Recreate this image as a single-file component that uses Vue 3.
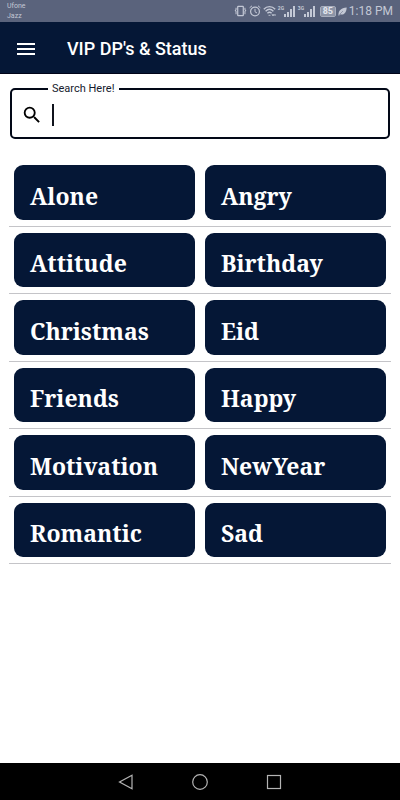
<template>
    <div class="screen">
        <div class="status">
            <div class="status-carriers">
                <span>Ufone</span>
                <span>Jazz</span>
            </div>
            <div class="status-icons">
                <svg width="13" height="12" viewBox="0 0 14 12" fill="none" stroke="currentColor">
                    <rect x="4" y="1" width="6" height="10" rx="0.5" stroke-width="1.3"/>
                    <path d="M2.2 2.5v2l-.8 1 .8 1v3M11.8 2.5v2l.8 1-.8 1v3" stroke-width="1.1"/>
                </svg>
                <svg width="12" height="12" viewBox="0 0 12 12" fill="none" stroke="currentColor">
                    <circle cx="6" cy="6.5" r="4.4" stroke-width="1.2"/>
                    <path d="M6 3.8v3l2 1.2M.6 2.8L3 .8M11.4 2.8L9 .8"/>
                </svg>
                <svg width="13" height="12" viewBox="0 0 13 12" fill="none" stroke="currentColor">
                    <path d="M.8 4.2C4 .8 9 .8 12.2 4.2M2.6 6.2C5 3.9 8 3.9 10.4 6.2M4.4 8.2C5.7 7 7.3 7 8.6 8.2" stroke-width="1.4"/>
                    <path d="M5.5 10.3h2M9 9l1 2 1-2M12 9v2" stroke-width="0.9"/>
                </svg>
                <div v-for="net in networks" :key="net" class="signal">
                    <span>{{ net }}</span>
                    <svg width="11" height="11" viewBox="0 0 11 11" fill="currentColor">
                        <path d="M0 8h2v3H0zM3 6h2v5H3zM6 3h2v8H6zM9 0h2v11H9z"/>
                    </svg>
                </div>
                <div class="battery"><span>85</span></div>
                <svg width="9" height="9" viewBox="0 0 9 9">
                    <path d="M.5 8.5C0 4 3 1 8.7.5C8.5 6 5.5 8.5 2 7.3L1 8.7z" fill="currentColor"/>
                    <path d="M1.5 7.5L5 4" stroke="#5a637c" stroke-width="0.5"/>
                </svg>
                <span class="clock">1:18 PM</span>
            </div>
        </div>

        <header class="bar">
            <button class="menu-btn" type="button" aria-label="Menu">
                <svg width="18" height="12" viewBox="0 0 18 12" fill="currentColor">
                    <path d="M0 0h18v2H0zM0 5h18v2H0zM0 10h18v2H0z"/>
                </svg>
            </button>
            <h1>VIP DP's &amp; Status</h1>
        </header>

        <main class="content">
            <fieldset class="search">
                <legend><label for="search">Search Here!</label></legend>
                <svg class="search-icon" viewBox="0 0 24 24" fill="currentColor">
                    <path d="M15.5 14h-.79l-.28-.27A6.471 6.471 0 0 0 16 9.5 6.5 6.5 0 1 0 9.5 16c1.61 0 3.09-.59 4.23-1.57l.27.28v.79l5 4.99L20.49 19l-4.99-5zm-6 0C7.01 14 5 11.99 5 9.5S7.01 5 9.5 5 14 7.01 14 9.5 11.99 14 9.5 14z"/>
                </svg>
                <span class="caret"></span>
                <input id="search" v-model="query" type="text" autocomplete="off"/>
            </fieldset>

            <ul class="list">
                <li v-for="row in rows" :key="row[0]" class="list-row">
                    <button v-for="item in row" :key="item" class="category" type="button">{{ item }}</button>
                </li>
            </ul>
        </main>

        <nav class="nav">
            <button type="button" aria-label="Back">
                <svg width="16" height="16" viewBox="0 0 16 16"><path d="M14 1.2v13.6L1.5 8z"/></svg>
            </button>
            <button type="button" aria-label="Home">
                <svg width="16" height="16" viewBox="0 0 16 16"><circle cx="8" cy="8" r="7.3"/></svg>
            </button>
            <button type="button" aria-label="Recent apps">
                <svg width="16" height="16" viewBox="0 0 16 16"><rect x="1.5" y="1.5" width="13" height="13"/></svg>
            </button>
        </nav>
    </div>
</template>

<script setup>
import { ref } from 'vue';

const query = ref('');
const networks = ['2G', '3G'];
const rows = [
    ['Alone', 'Angry'],
    ['Attitude', 'Birthday'],
    ['Christmas', 'Eid'],
    ['Friends', 'Happy'],
    ['Motivation', 'NewYear'],
    ['Romantic', 'Sad']
];
</script>

<style>
    body{
        margin: 0;
        background-color: #FFFFFF;
    }
</style>

<style scoped>
    .screen{
        display: flex;
        flex-direction: column;
        min-height: 100vh;
        font-family: Roboto, "Noto Sans", sans-serif;
    }
    button{
        border: 0;
        padding: 0;
        background: none;
        color: inherit;
        font-family: inherit;
        cursor: pointer;
    }
    .status{
        display: flex;
        justify-content: space-between;
        align-items: center;
        height: 22px;
        padding: 0 7px;
        background-color: #5a637c;
        color: #c3c8d5;
    }
    .status-carriers{
        display: flex;
        flex-direction: column;
        font-size: 7px;
        line-height: 10px;
    }
    .status-icons{
        display: flex;
        align-items: center;
        gap: 2px;
    }
    .signal{
        display: flex;
        align-items: center;
        width: 18px;
    }
    .signal span{
        align-self: flex-start;
        font-size: 5px;
        line-height: 5px;
        font-weight: 700;
    }
    .battery{
        display: flex;
        align-items: center;
        margin-left: 2px;
        border: 1px solid #a9afbe;
        border-radius: 2px;
    }
    .battery span{
        width: 14px;
        background-color: #8d94a6;
        color: #e4e7ee;
        font-size: 9px;
        line-height: 9px;
        font-weight: 700;
        text-align: center;
    }
    .clock{
        font-size: 12px;
        line-height: 14px;
    }
    .bar{
        box-sizing: border-box;
        display: flex;
        align-items: center;
        gap: 32px;
        height: 52px;
        padding: 2px 17px 0;
        background-color: #051736;
        border-bottom: 1px solid #000418;
        color: #FFFFFF;
    }
    .menu-btn{
        display: flex;
    }
    .bar h1{
        margin: 0;
        font-size: 18px;
        line-height: 24px;
        font-weight: 500;
    }
    .content{
        flex: 1;
        padding: 8px 9px 24px;
    }
    .search{
        display: flex;
        align-items: center;
        gap: 9px;
        min-width: 0;
        margin: 0 1px;
        padding: 8px 9px 11px;
        border: 2px solid #020817;
        border-radius: 5px;
    }
    .search legend{
        margin-left: 27px;
        padding: 0 4px;
        font-size: 11px;
        line-height: 14px;
        color: #151a2c;
    }
    .search-icon{
        flex: none;
        width: 22px;
        height: 22px;
        color: #000000;
    }
    .caret{
        flex: none;
        width: 2px;
        height: 22px;
        background-color: #10131c;
    }
    .search input{
        flex: 1;
        min-width: 0;
        border: 0;
        outline: 0;
        padding: 0;
        background: none;
        font-family: inherit;
        font-size: 16px;
        line-height: 22px;
    }
    .list{
        display: grid;
        grid-auto-rows: 1fr;
        min-height: 405px;
        margin: 20px 0 0;
        padding: 0;
        list-style: none;
    }
    .list-row{
        box-sizing: border-box;
        display: grid;
        grid-template-columns: 1fr 1fr;
        gap: 10px;
        padding: 6px 5px;
        border-bottom: 1px solid #c4c4c8;
    }
    .category{
        padding: 7px 16px 0;
        border-radius: 9px;
        background-color: #051736;
        color: #FFFFFF;
        font-family: "Noto Serif", "DejaVu Serif Condensed", "DejaVu Serif", serif;
        font-size: 23px;
        line-height: 30px;
        font-weight: 700;
        text-align: left;
    }
    .nav{
        display: flex;
        justify-content: center;
        align-items: center;
        gap: 58px;
        height: 37px;
        background-color: #000000;
    }
    .nav button{
        display: flex;
    }
    .nav svg{
        fill: none;
        stroke: #b4b4b4;
        stroke-width: 1.2;
    }
</style>
